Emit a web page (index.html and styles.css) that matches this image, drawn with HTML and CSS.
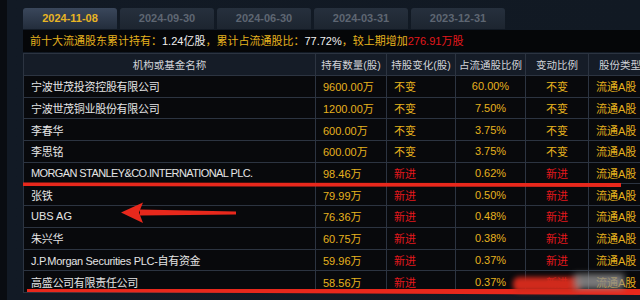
FILE: index.html
```html
<!DOCTYPE html>
<html lang="zh-CN">
<head>
<meta charset="utf-8">
<title>前十大流通股东</title>
<link rel="stylesheet" href="styles.css">
</head>
<body>
<div class="page">
  <div class="tabs">
    <div class="tab active">2024-11-08</div>
    <div class="tab">2024-09-30</div>
    <div class="tab">2024-06-30</div>
    <div class="tab">2024-03-31</div>
    <div class="tab">2023-12-31</div>
  </div>
  <div class="info">
    <span class="g">前十大流通股东累计持有：</span><span class="w">1.24亿股</span><span class="g">，累计占流通股比：</span><span class="w">77.72%</span><span class="g">，较上期增加</span><span class="r">276.91万股</span>
  </div>
  <div class="tablewrap">
    <table class="holders">
      <colgroup>
        <col class="c1"><col class="c2"><col class="c3"><col class="c4"><col class="c5"><col class="c6">
      </colgroup>
      <thead>
        <tr><th>机构或基金名称</th><th>持有数量(股)</th><th>持股变化(股)</th><th>占流通股比例</th><th>变动比例</th><th class="lt">股份类型</th></tr>
      </thead>
      <tbody>
        <tr><td class="name">宁波世茂投资控股有限公司</td><td class="g">9600.00万</td><td class="g">不变</td><td class="g ctr">60.00%</td><td class="g ctr">不变</td><td class="g">流通A股</td></tr>
        <tr><td class="name">宁波世茂铜业股份有限公司</td><td class="g">1200.00万</td><td class="g">不变</td><td class="g ctr">7.50%</td><td class="g ctr">不变</td><td class="g">流通A股</td></tr>
        <tr><td class="name">李春华</td><td class="g">600.00万</td><td class="g">不变</td><td class="g ctr">3.75%</td><td class="g ctr">不变</td><td class="g">流通A股</td></tr>
        <tr><td class="name">李思铭</td><td class="g">600.00万</td><td class="g">不变</td><td class="g ctr">3.75%</td><td class="g ctr">不变</td><td class="g">流通A股</td></tr>
        <tr><td class="name lat">MORGAN STANLEY&amp;CO.INTERNATIONAL PLC.</td><td class="g">98.46万</td><td class="r">新进</td><td class="g ctr">0.62%</td><td class="r ctr">新进</td><td class="g">流通A股</td></tr>
        <tr><td class="name">张铁</td><td class="g">79.99万</td><td class="r">新进</td><td class="g ctr">0.50%</td><td class="r ctr">新进</td><td class="g">流通A股</td></tr>
        <tr><td class="name plain">UBS AG</td><td class="g">76.36万</td><td class="r">新进</td><td class="g ctr">0.48%</td><td class="r ctr">新进</td><td class="g">流通A股</td></tr>
        <tr><td class="name">朱兴华</td><td class="g">60.75万</td><td class="r">新进</td><td class="g ctr">0.38%</td><td class="r ctr">新进</td><td class="g">流通A股</td></tr>
        <tr><td class="name lat2">J.P.Morgan Securities PLC-自有资金</td><td class="g">59.96万</td><td class="r">新进</td><td class="g ctr">0.37%</td><td class="r ctr">新进</td><td class="g">流通A股</td></tr>
        <tr><td class="name">高盛公司有限责任公司</td><td class="g">58.56万</td><td class="r">新进</td><td class="g ctr">0.37%</td><td class="r ctr">新进</td><td class="g">流通A股</td></tr>
      </tbody>
    </table>
  </div>
  <svg class="marks" width="640" height="300" viewBox="0 0 640 300">
    <polygon points="23,182.5 621,183 621,187 23,186" fill="#e8281c"/>
    <polygon points="140,209.5 236,211.5 236,214.5 140,215.5" fill="#e8281c"/>
    <polygon points="121,212.5 143,202.5 139,212.5 143,223" fill="#e8281c"/>
    <polygon points="27,289 640,289 640,295 27,292" fill="#e8281c"/>
  </svg>
  <div class="wm">
    <div class="wm-red"></div>
    <div class="wm-gray"></div>
  </div>
</div>
</body>
</html>
```
FILE: styles.css
```css
html, body {
  margin: 0;
  padding: 0;
}
body {
  width: 640px;
  height: 300px;
  overflow: hidden;
  background: linear-gradient(to right, #090c11 0, #090c11 7px, #121a25 7px, #111923 100%);
  font-family: "Liberation Sans", "Noto Sans CJK SC", sans-serif;
  font-size: 11px;
}
.page {
  position: relative;
  width: 640px;
  height: 300px;
}
.tabs {
  display: flex;
  gap: 3px;
  padding: 8px 0 0 23px;
  height: 21px;
}
.tab {
  width: 94px;
  height: 21px;
  line-height: 21px;
  text-align: center;
  border-radius: 3px 3px 0 0;
  background: linear-gradient(#26303d, #1d2530);
  color: #5e6672;
  font-weight: bold;
  font-size: 11px;
}
.tab.active {
  background: linear-gradient(#3a475b, #232d3c);
  color: #e8b424;
}
.info {
  margin: 1px 0 0 23px;
  height: 22px;
  line-height: 22px;
  background: #050608;
  padding-left: 7px;
  font-size: 11px;
  white-space: nowrap;
}
.g { color: #e6b21e; }
.w { color: #f0f0f0; }
.r { color: #e3181c; }
.tablewrap {
  margin: 1px 0 0 23px;
  width: 617px;
  overflow: hidden;
}
.holders {
  border-collapse: collapse;
  table-layout: fixed;
  width: 680px;
}
.c1 { width: 292px; }
.c2 { width: 71px; }
.c3 { width: 69px; }
.c4 { width: 70px; }
.c5 { width: 63px; }
.c6 { width: 115px; }
.holders th {
  height: 21px;
  background: #151c27;
  color: #d0d3d8;
  font-weight: normal;
  font-size: 10.5px;
  border: 1px solid #2c3441;
  text-align: center;
  padding: 0;
  white-space: nowrap;
}
.holders th.lt {
  text-align: left;
  padding-left: 10px;
}
.holders td {
  height: 20.7px;
  background: #08090c;
  border: 1px solid #2c3441;
  padding: 0 0 0 7px;
  white-space: nowrap;
  overflow: hidden;
}
.holders td.name {
  color: #e4e4e4;
  letter-spacing: -0.3px;
}
.holders td.lat {
  letter-spacing: -0.6px;
}
.holders td.plain {
  letter-spacing: 0;
}
.holders td.lat2 {
  letter-spacing: -0.3px;
}
.holders td.ctr {
  text-align: center;
  padding-left: 0;
}
.marks {
  position: absolute;
  left: 0;
  top: 0;
}
.wm {
  position: absolute;
  left: 0;
  top: 0;
  width: 640px;
  height: 300px;
  pointer-events: none;
}
.wm-red {
  position: absolute;
  left: 513px;
  top: 277px;
  width: 68px;
  height: 15px;
  background: #d02a1c;
  filter: blur(2.5px);
  border-radius: 6px;
}
.wm-gray {
  position: absolute;
  left: 574px;
  top: 274px;
  width: 50px;
  height: 15px;
  background: #8c8c8c;
  filter: blur(3px);
  opacity: 0.85;
}
```
